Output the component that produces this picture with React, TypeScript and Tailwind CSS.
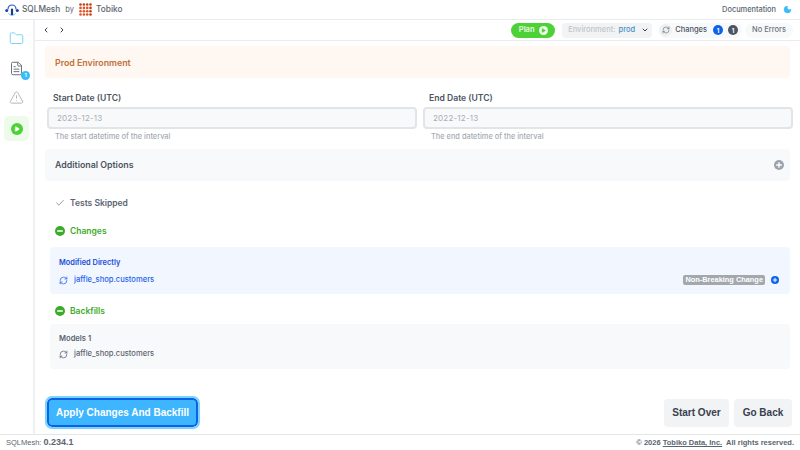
import React from "react";
import { ChevronLeft, ChevronRight, ChevronDown, Check, Moon, RefreshCw, Folder, TriangleAlert, FileText, Play, Plus, Minus } from "lucide-react";

const Logo = () => (
  <svg width="14" height="14" viewBox="0 0 14 14" fill="none">
    <path d="M3 6.5V6a4 4 0 0 1 8 0v.5" stroke="#2f55c4" strokeWidth="1.2" />
    <rect x="5.9" y="5.5" width="2.2" height="7" rx="1.1" fill="#1e3a8a" />
    <circle cx="1.7" cy="7.5" r="1.5" fill="#1e40af" />
    <circle cx="12.3" cy="7.5" r="1.5" fill="#1e40af" />
    <path d="M3.6 10.4c.7 1 1.4 1.5 2.2 1.7M10.4 10.4c-.7 1-1.4 1.5-2.2 1.7" stroke="#38bdf8" strokeWidth="1" />
  </svg>
);

const TobikoLogo = () => (
  <svg width="13" height="13" viewBox="0 0 13 13">
    {[1.5, 4.9, 8.2, 11.5].map((y) =>
      [1.5, 4.9, 8.2, 11.5].map((x) => (
        <circle key={`${x}-${y}`} cx={x} cy={y} r="1.3" fill={y < 4 || x > 10 ? "#c2410c" : "#e0532a"} />
      ))
    )}
  </svg>
);

const Toggle = ({ color, kind, small }: { color: string; kind: "minus" | "plus"; small?: boolean }) => (
  <span className={`flex items-center justify-center rounded-full ${small ? "h-[8px] w-[8px]" : "h-[10px] w-[10px]"} ${color}`}>
    {kind === "minus" ? (
      <Minus className="h-[8px] w-[8px] text-white" strokeWidth={4} />
    ) : (
      <Plus className={small ? "h-[6px] w-[6px] text-white" : "h-[8px] w-[8px] text-white"} strokeWidth={4} />
    )}
  </span>
);

const DateField = ({ label, value, hint }: { label: string; value: string; hint: string }) => (
  <div className="flex-1">
    <div className="mb-[1px] pt-[1px] pl-[6px] text-[8.6px] font-semibold leading-[15px] text-[#4b5563]">{label}</div>
    <div className="flex h-[22px] items-center rounded-[4px] border-2 border-[#e2e5e8] bg-[#f8f9fa] pl-[8px] text-[8px] tracking-[0.2px] text-[#a8adb3]">
      {value}
    </div>
    <div className="mt-[2px] pl-[8px] text-[7.4px] font-medium leading-[12px] text-[#a5abb2]">{hint}</div>
  </div>
);

export default function App() {
  return (
    <div className="flex h-[450px] w-[800px] flex-col overflow-hidden bg-white font-['Inter',sans-serif] text-[#4b5563]">
      {/* top bar */}
      <header className="flex h-[20px] shrink-0 items-center justify-between border-b border-[#e9ebee] pl-[5px] pr-[8px]">
        <div className="flex items-center">
          <Logo />
          <span className="ml-[3px] text-[8.3px] font-medium text-[#5b6470]">SQLMesh</span>
          <span className="ml-[5px] text-[7.5px] text-[#5b6470]">by</span>
          <span className="ml-[5px]"><TobikoLogo /></span>
          <span className="ml-[4px] text-[8.3px] font-medium text-[#5b6470]">Tobiko</span>
        </div>
        <div className="flex items-center gap-[7px]">
          <span className="text-[7.4px] font-medium text-[#5b6470]">Documentation</span>
          <Moon className="h-[9px] w-[9px] fill-[#38bdf8] text-[#38bdf8]" />
        </div>
      </header>

      <div className="flex min-h-0 flex-1">
        {/* side rail */}
        <aside className="flex w-[35px] shrink-0 flex-col items-center border-r-2 border-[#eff0f2] pt-[11px]">
          <Folder className="h-[15px] w-[15px] text-[#7dd3f5]" strokeWidth={1.6} />
          <div className="relative mt-[15px]">
            <FileText className="h-[15px] w-[15px] text-[#6b7280]" strokeWidth={1.6} />
            <span className="absolute -right-[6px] -bottom-[4px] flex h-[9px] w-[9px] items-center justify-center rounded-full bg-[#38bdf8] text-[5px] font-bold text-white">
              1
            </span>
          </div>
          <TriangleAlert className="mt-[14px] h-[15px] w-[15px] text-[#b3b7bd]" strokeWidth={1.6} />
          <div className="mt-[11px] flex h-[25px] w-[25px] items-center justify-center rounded-[5px] bg-[#eefbea]">
            <span className="flex h-[12px] w-[12px] items-center justify-center rounded-full bg-[#4cd137]">
              <Play className="h-[6px] w-[6px] fill-white text-white" />
            </span>
          </div>
        </aside>

        <main className="flex min-w-0 flex-1 flex-col">
          {/* toolbar */}
          <div className="flex h-[21px] shrink-0 items-center justify-between border-b border-[#e9ebee] pl-[7px] pr-[7px]">
            <div className="flex items-center gap-[8px]">
              <ChevronLeft className="h-[8px] w-[8px] text-[#374151]" strokeWidth={3} />
              <ChevronRight className="h-[8px] w-[8px] text-[#374151]" strokeWidth={3} />
            </div>
            <div className="flex items-center">
              <button className="flex h-[15px] w-[44px] items-center justify-center gap-[4px] rounded-full bg-[#4cd137] text-[7.5px] font-semibold text-[#e9fbe5]">
                Plan
                <span className="flex h-[9px] w-[9px] items-center justify-center rounded-full bg-[#eefbea]">
                  <Play className="h-[5px] w-[5px] fill-[#4cd137] text-[#4cd137]" />
                </span>
              </button>
              <div className="ml-[7px] flex h-[15px] w-[90px] items-center rounded-[4px] bg-[#f1f3f4] pl-[6px] text-[7.5px] font-medium">
                <span className="text-[#c0c5ca]">Environment:</span>
                <span className="ml-[3px] text-[#4a90c8]">prod</span>
                <ChevronDown className="ml-[6px] h-[8px] w-[8px] text-[#374151]" strokeWidth={3} />
              </div>
              <div className="ml-[7px] flex h-[15px] items-center rounded-full bg-[#f8f9fa] pr-[4px] text-[7.5px] font-medium text-[#4b5563]">
                <span className="flex h-[13px] w-[13px] items-center justify-center rounded-full bg-[#eff0f2]">
                  <RefreshCw className="h-[8px] w-[8px] text-[#6b7280]" />
                </span>
                <span className="ml-[3px]">Changes</span>
                <span className="ml-[6px] flex h-[10px] w-[10px] items-center justify-center rounded-full bg-[#0b63ea] text-[6px] font-bold text-white">1</span>
                <span className="ml-[5px] flex h-[10px] w-[10px] items-center justify-center rounded-full bg-[#4b5563] text-[6px] font-bold text-white">1</span>
              </div>
              <div className="ml-[3px] flex h-[15px] items-center rounded-full bg-[#f8f9fa] px-[7px] text-[7.5px] font-medium text-[#6b7280]">
                No Errors
              </div>
            </div>
          </div>

          {/* form */}
          <div className="flex min-h-0 flex-1 flex-col pl-[10px] pr-[10px]">
            <div className="mt-[5px] flex h-[32px] shrink-0 items-center rounded-[4px] bg-[#fef7f2] pl-[10px] pt-[1px] text-[8.8px] font-semibold text-[#c2703a]">
              Prod Environment
            </div>
            <div className="-mr-[3px] ml-[2px] mt-[12px] flex shrink-0 gap-[6px]">
              <DateField label="Start Date (UTC)" value="2023-12-13" hint="The start datetime of the interval" />
              <DateField label="End Date (UTC)" value="2022-12-13" hint="The end datetime of the interval" />
            </div>
            <div className="mt-[6px] flex h-[32px] shrink-0 items-center justify-between rounded-[4px] bg-[#f8f9fa] pl-[10px] pr-[6px] text-[8.8px] font-semibold text-[#4b5563]">
              Additional Options
              <Toggle color="bg-[#9ca3af]" kind="plus" />
            </div>

            <div className="mt-[16px] flex h-[12px] shrink-0 items-center pl-[10px] text-[8.5px] font-semibold text-[#5b6470]">
              <Check className="h-[10px] w-[10px] text-[#5b6470]" strokeWidth={1.6} />
              <span className="ml-[5px]">Tests Skipped</span>
            </div>

            <div className="mt-[16px] flex h-[12px] shrink-0 items-center pl-[10px] text-[8.5px] font-semibold text-[#3cab2c]">
              <Toggle color="bg-[#3cab2c]" kind="minus" />
              <span className="ml-[5px]">Changes</span>
            </div>
            <div className="ml-[5px] mt-[10px] flex h-[47px] shrink-0 flex-col justify-center gap-[5px] rounded-[4px] bg-[#f1f6ff] pl-[9px] pr-[11px] pt-[2px]">
              <div className="text-[7.4px] font-semibold leading-[12px] text-[#1d4ed8]">Modified Directly</div>
              <div className="flex items-center justify-between">
                <div className="flex items-center text-[7.6px] font-medium leading-[12px] text-[#2563eb]">
                  <RefreshCw className="h-[9px] w-[9px]" />
                  <span className="ml-[6px]">jaffle_shop.customers</span>
                </div>
                <div className="flex items-center gap-[6px]">
                  <span className="rounded-[2px] bg-[#a3a8ad] px-[2px] font-['Liberation_Sans',sans-serif] text-[7.4px] font-bold leading-[10px] text-white">Non-Breaking Change</span>
                  <Toggle color="bg-[#0b63ea]" kind="plus" small />
                </div>
              </div>
            </div>

            <div className="mt-[11px] flex h-[12px] shrink-0 items-center pl-[10px] text-[8.5px] font-semibold text-[#3cab2c]">
              <Toggle color="bg-[#3cab2c]" kind="minus" />
              <span className="ml-[5px]">Backfills</span>
            </div>
            <div className="ml-[5px] mt-[7px] flex h-[45px] shrink-0 flex-col justify-center gap-[3px] rounded-[4px] bg-[#f8f9fa] pl-[9px]">
              <div className="text-[7.6px] font-semibold leading-[12px] text-[#5b6470]">Models 1</div>
              <div className="flex items-center text-[7.6px] font-medium leading-[12px] text-[#5b6470]">
                <RefreshCw className="h-[9px] w-[9px]" />
                <span className="ml-[6px]">jaffle_shop.customers</span>
              </div>
            </div>

            <div className="mb-[7px] mt-auto flex shrink-0 items-center justify-between pl-[2px]">
              <button className="h-[29px] w-[151px] rounded-[5px] border-2 border-[#0b63ea] bg-[#3db5ff] font-['Liberation_Sans',sans-serif] text-[10px] font-bold text-white outline-2 outline-[#7dd3fc]">
                Apply Changes And Backfill
              </button>
              <div className="-mr-[2px] flex gap-[5px] font-['Liberation_Sans',sans-serif] text-[10px] font-bold text-[#374151]">
                <button className="h-[28px] w-[65px] rounded-[4px] bg-[#f1f3f4]">Start Over</button>
                <button className="h-[28px] w-[58px] rounded-[4px] bg-[#f1f3f4]">Go Back</button>
              </div>
            </div>
          </div>
        </main>
      </div>

      {/* footer */}
      <footer className="flex h-[16px] shrink-0 items-center justify-between border-t border-[#e4e6e9] pl-[6px] pr-[6px] font-['Liberation_Sans',sans-serif] text-[7.5px] text-[#5b6470]">
        <span>
          SQLMesh: <b className="text-[9px]">0.234.1</b>
        </span>
        <span className="font-bold">
          © 2026 <span className="underline">Tobiko Data, Inc.</span>&nbsp; All rights reserved.
        </span>
      </footer>
    </div>
  );
}
